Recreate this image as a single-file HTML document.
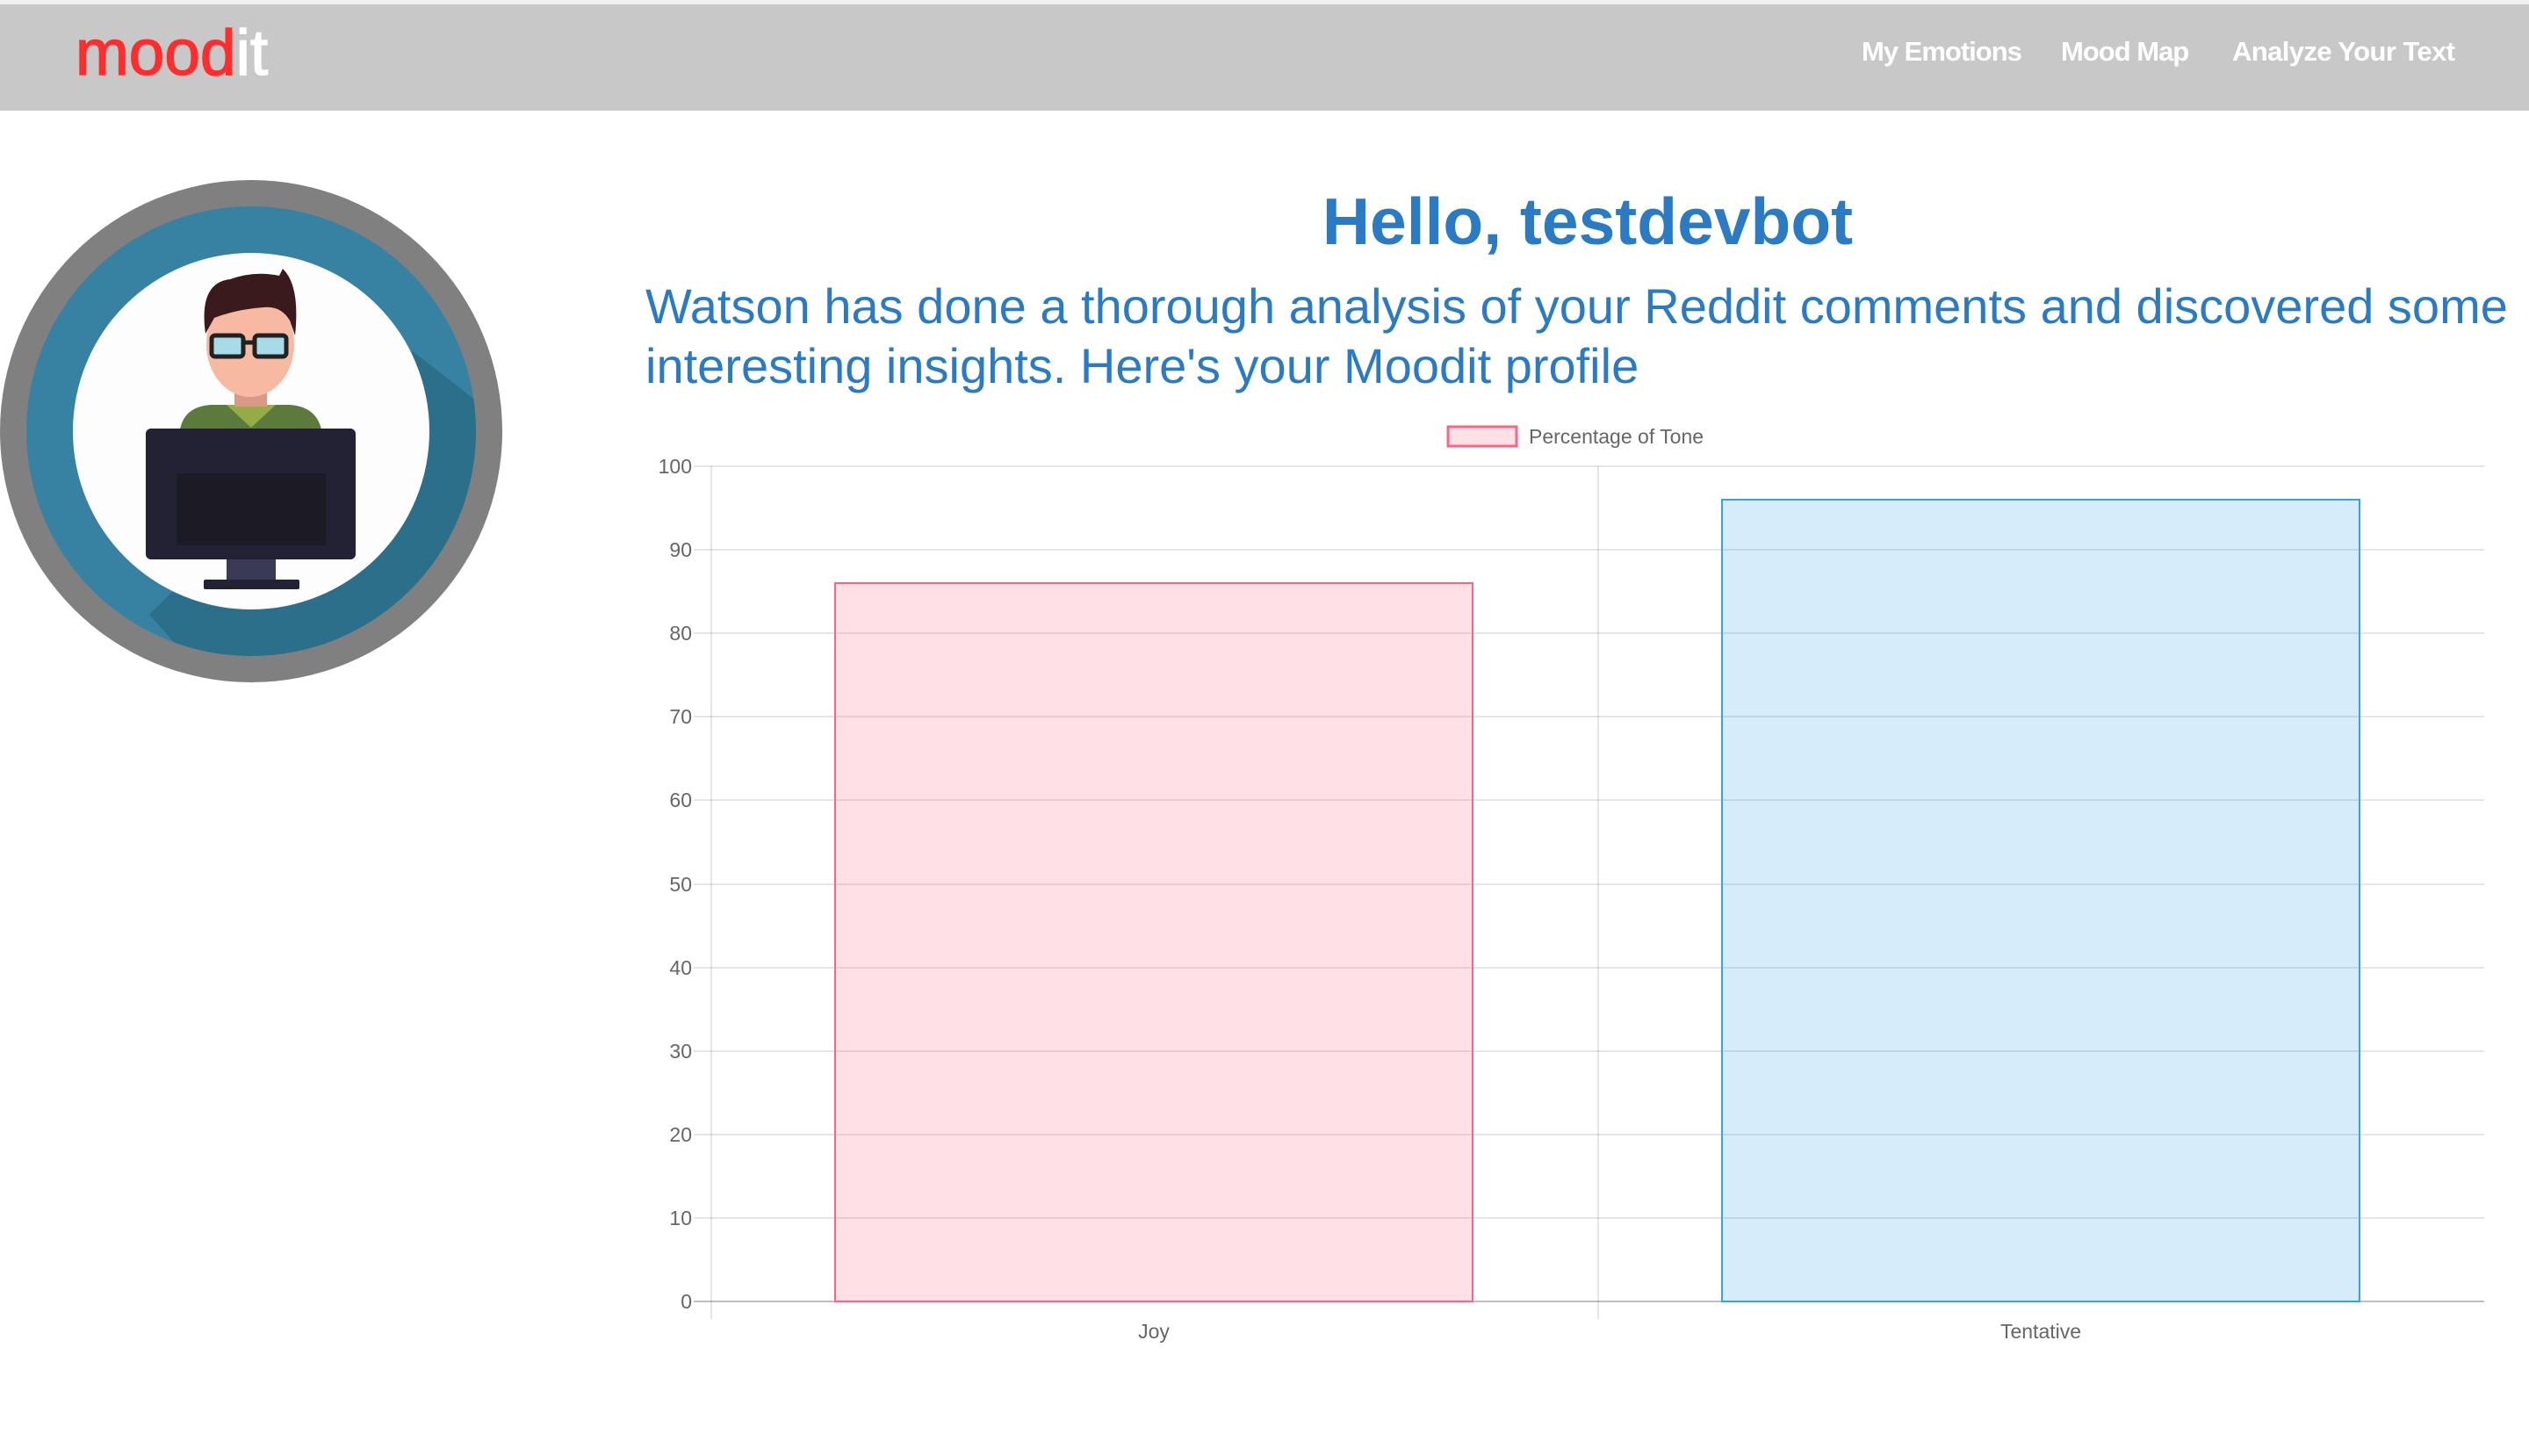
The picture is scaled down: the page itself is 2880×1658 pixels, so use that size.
<!DOCTYPE html>
<html><head><meta charset="utf-8"><style>
html,body{margin:0;padding:0;background:#fff;width:2880px;height:1658px;overflow:hidden;font-family:"Liberation Sans",sans-serif}
.top{position:absolute;left:0;top:0;width:2880px;height:5px;background:#f0f0f0}
.nav{position:absolute;left:0;top:5px;width:2880px;height:121px;background:#c8c8c8}
.logo{position:absolute;left:86px;top:14px;font-size:73px;color:#ff2d2d;-webkit-text-stroke:1.5px #ff2d2d}
.logo span{color:#fff;-webkit-text-stroke:1.5px #fff}
.links{position:absolute;top:36px;font-size:31px;font-weight:bold;color:#fff;letter-spacing:-1px}
h1{position:absolute;left:0;width:3616px;text-align:center;top:209px;margin:0;font-size:75px;color:#2b7bc4;font-weight:bold}
.p{position:absolute;left:735px;font-size:56px;color:#2b7bc4;white-space:nowrap}
</style></head><body>
<div class="top"></div>
<div class="nav">
<div class="logo">mood<span>it</span></div>
<div class="links" style="left:2120px">My Emotions</div>
<div class="links" style="left:2347px">Mood Map</div>
<div class="links" style="left:2542px;letter-spacing:-0.6px">Analyze Your Text</div>
</div>
<svg style="position:absolute;left:0;top:0" width="600" height="800">
<defs><clipPath id="c"><circle cx="286" cy="491" r="256"/></clipPath></defs>
<circle cx="286" cy="491" r="286" fill="#808080"/>
<circle cx="286" cy="491" r="256" fill="#3782a2"/>
<polygon clip-path="url(#c)" points="470,400 560,470 560,800 260,800 170,700" fill="#2b6f8a"/>
<circle cx="286" cy="491" r="203" fill="#fdfdfd"/>
<path d="M205,489 Q210,463 240,461 L330,461 Q360,463 366,489 Z" fill="#5c7a3c"/>
<path d="M258,461 L286,487 L314,461 Z" fill="#95ab45"/>
<rect x="267" y="430" width="37" height="33" fill="#d99a85"/>
<ellipse cx="285" cy="392" rx="50" ry="60" fill="#f7b9a2"/>
<path d="M234,380 Q226,322 262,318 Q290,308 318,314 L322,306 Q342,325 336,382 L330,365 Q320,348 300,350 Q270,352 244,362 Z" fill="#3a1a1c"/>
<rect x="241" y="382" width="36" height="24" rx="4" fill="#a7dbe8" stroke="#222" stroke-width="5"/>
<rect x="290" y="382" width="36" height="24" rx="4" fill="#a7dbe8" stroke="#222" stroke-width="5"/>
<line x1="277" y1="390" x2="290" y2="390" stroke="#222" stroke-width="5"/>
<rect x="166" y="488" width="239" height="149" rx="6" fill="#232134"/>
<rect x="201" y="539" width="170" height="82" fill="#1c1a25"/>
<rect x="258" y="637" width="56" height="23" fill="#393a55"/>
<rect x="232" y="660" width="109" height="11" rx="2" fill="#232134"/>
</svg>
<h1>Hello, testdevbot</h1>
<div class="p" style="top:316px">Watson has done a thorough analysis of your Reddit comments and discovered some</div>
<div class="p" style="top:384px">interesting insights. Here's your Moodit profile</div>
<svg style="position:absolute;left:0;top:0" width="2880" height="1658" font-family="Liberation Sans, sans-serif" font-size="23" fill="#666">
<rect x="1649" y="486" width="78" height="22" fill="rgba(255,99,132,0.2)" stroke="rgb(255,99,132)" stroke-width="3"/>
<text x="1741" y="505">Percentage of Tone</text>
<g stroke="rgba(0,0,0,0.1)" stroke-width="2">
<line x1="790" y1="531" x2="2829" y2="531"/><line x1="790" y1="626" x2="2829" y2="626"/>
<line x1="790" y1="721" x2="2829" y2="721"/><line x1="790" y1="816" x2="2829" y2="816"/>
<line x1="790" y1="911" x2="2829" y2="911"/><line x1="790" y1="1007" x2="2829" y2="1007"/>
<line x1="790" y1="1102" x2="2829" y2="1102"/><line x1="790" y1="1197" x2="2829" y2="1197"/>
<line x1="790" y1="1292" x2="2829" y2="1292"/><line x1="790" y1="1387" x2="2829" y2="1387"/>
<line x1="810" y1="531" x2="810" y2="1502"/><line x1="1820" y1="531" x2="1820" y2="1502"/>
</g>
<line x1="790" y1="1482" x2="2829" y2="1482" stroke="rgba(0,0,0,0.25)" stroke-width="2"/>
<rect x="951" y="664" width="726" height="818" fill="rgba(255,99,132,0.2)" stroke="rgb(255,99,132)" stroke-width="2"/>
<rect x="1961" y="569" width="726" height="913" fill="rgba(54,162,235,0.2)" stroke="rgb(54,162,235)" stroke-width="2"/>
<g text-anchor="end">
<text x="788" y="539">100</text><text x="788" y="634">90</text><text x="788" y="729">80</text>
<text x="788" y="824">70</text><text x="788" y="919">60</text><text x="788" y="1015">50</text>
<text x="788" y="1110">40</text><text x="788" y="1205">30</text><text x="788" y="1300">20</text>
<text x="788" y="1395">10</text><text x="788" y="1490">0</text>
</g>
<g text-anchor="middle"><text x="1314" y="1524">Joy</text><text x="2324" y="1524">Tentative</text></g>
</svg>
</body></html>
